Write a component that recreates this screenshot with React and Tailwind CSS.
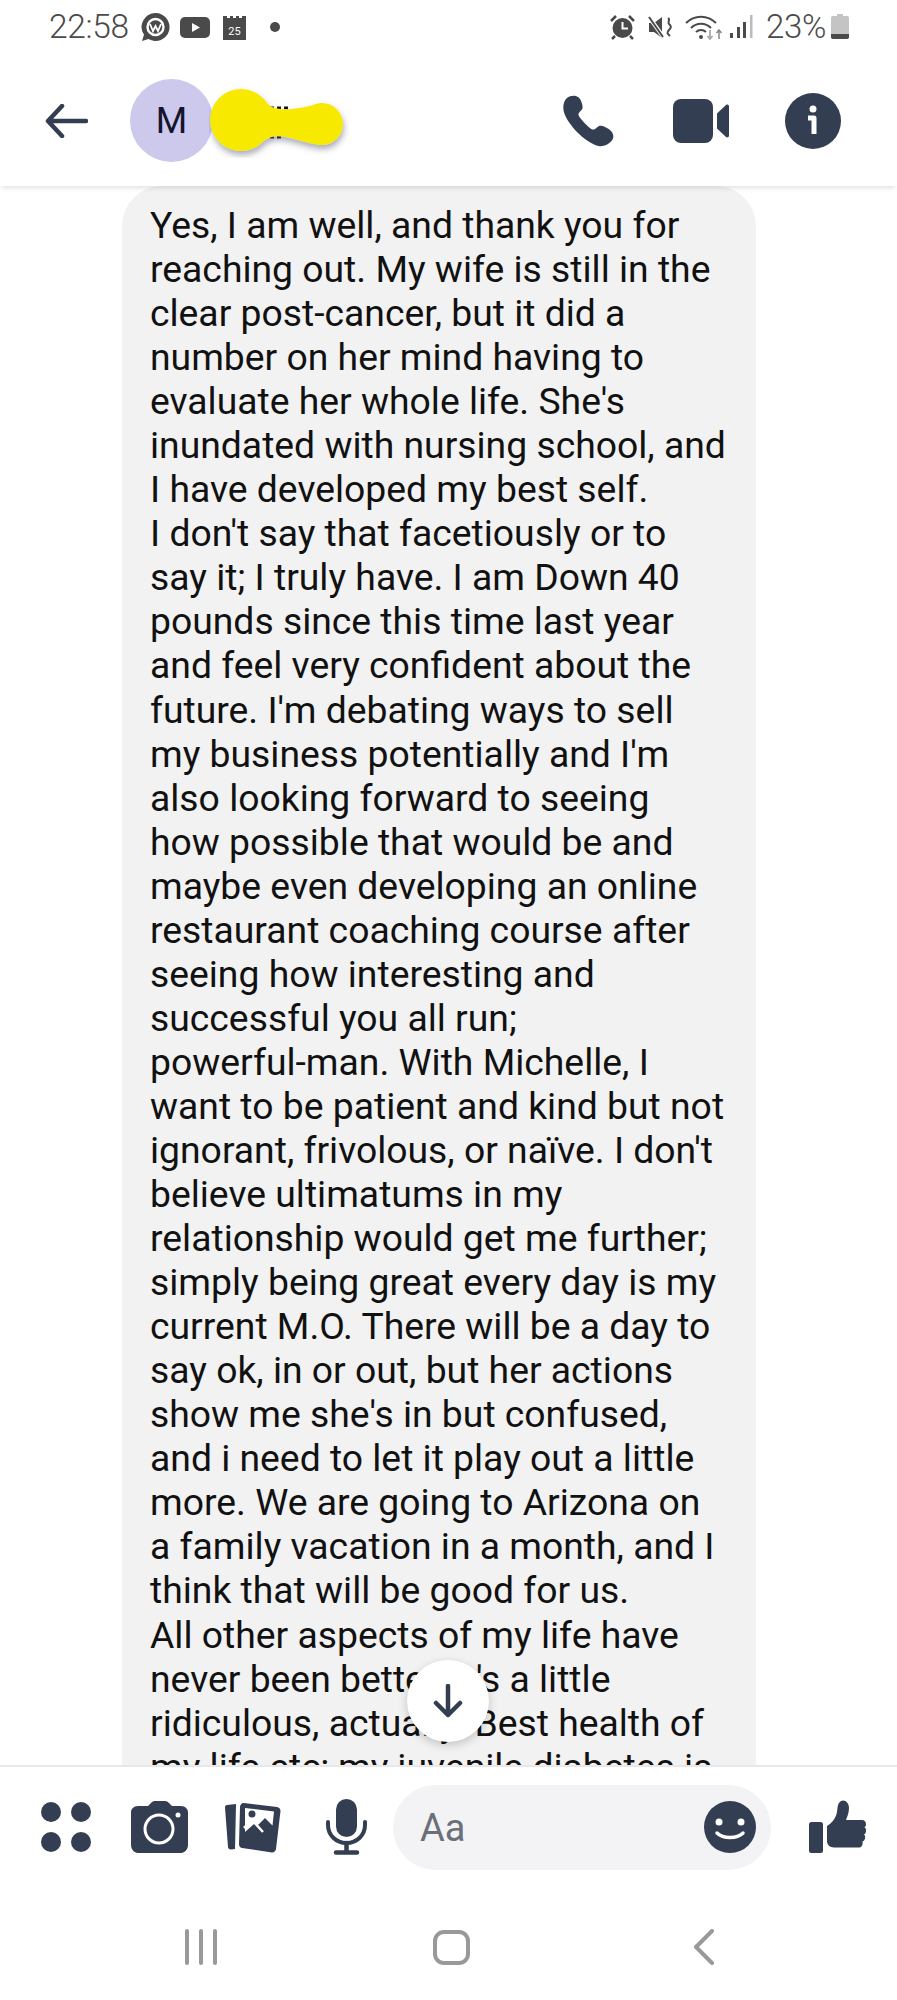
import React from 'react';

const ink = '#333e52';

const messageLines = [
  'Yes, I am well, and thank you for',
  'reaching out. My wife is still in the',
  'clear post-cancer, but it did a',
  'number on her mind having to',
  "evaluate her whole life. She's",
  'inundated with nursing school, and',
  'I have developed my best self.',
  "I don't say that facetiously or to",
  'say it; I truly have. I am Down 40',
  'pounds since this time last year',
  'and feel very confident about the',
  "future. I'm debating ways to sell",
  "my business potentially and I'm",
  'also looking forward to seeing',
  'how possible that would be and',
  'maybe even developing an online',
  'restaurant coaching course after',
  'seeing how interesting and',
  'successful you all run;',
  'powerful-man. With Michelle, I',
  'want to be patient and kind but not',
  "ignorant, frivolous, or naïve. I don't",
  'believe ultimatums in my',
  'relationship would get me further;',
  'simply being great every day is my',
  'current M.O. There will be a day to',
  'say ok, in or out, but her actions',
  "show me she's in but confused,",
  'and i need to let it play out a little',
  'more. We are going to Arizona on',
  'a family vacation in a month, and I',
  'think that will be good for us.',
  'All other aspects of my life have',
  "never been better; it's a little",
  'ridiculous, actually. Best health of',
  'my life etc; my juvenile diabetes is',
];

const StatusBar = () => (
  <div className="h-[55px] flex items-start justify-between pl-[49px] pr-[48px] pt-[12px] text-[#4a4a4a]">
    <div className="flex items-center">
      <span className="text-[33.5px] leading-[30px] font-light tracking-[-0.3px]">22:58</span>
      <svg className="ml-[11px]" width="31" height="30" viewBox="0 0 31 30">
        <path d="M15.5 1a14 14 0 1 1-7 26.1L2 29l2-6.2A14 14 0 0 1 15.5 1z" fill="#4a4a4a" />
        <circle cx="15.5" cy="15" r="8" fill="none" stroke="#fff" strokeWidth="2.4" />
        <path d="M10 12l3 7 2.500-5 2.500 5 3-7" fill="#4a4a4a" stroke="#fff" strokeWidth="1.800" />
      </svg>
      <svg className="ml-[9px]" width="30" height="21" viewBox="0 0 30 21">
        <rect width="30" height="21" rx="5" fill="#4a4a4a" />
        <path d="M12 6l8 4.500-8 4.500z" fill="#fff" />
      </svg>
      <svg className="ml-[12px]" width="25" height="26" viewBox="0 0 25 26">
        <path d="M1 2h4v2h3V2h3v2h3V2h3v2h3V2h4v24H1z" fill="#4a4a4a" />
        <text x="12.500" y="21" fontSize="11" textAnchor="middle" fill="#fff" fontFamily="Roboto, sans-serif">25</text>
      </svg>
      <span className="ml-[23px] w-[10px] h-[10px] rounded-full bg-[#4a4a4a]" />
    </div>
    <div className="flex items-center">
      <svg width="27" height="26" viewBox="0 0 27 26">
        <circle cx="13.500" cy="14" r="10" fill="#4a4a4a" />
        <path d="M13.500 8v6.500H19" fill="none" stroke="#fff" strokeWidth="2" />
        <path d="M2 7l5-5M25 7l-5-5M6 22l-3 3M21 22l3 3" stroke="#4a4a4a" strokeWidth="2.500" />
      </svg>
      <svg className="ml-[12px]" width="26" height="25" viewBox="0 0 26 25">
        <path d="M1 8h5l8-6v21l-8-6H1z" fill="#4a4a4a" />
        <path d="M1 2l15 21" stroke="#fff" strokeWidth="4" />
        <path d="M1 2l14 20" stroke="#4a4a4a" strokeWidth="2" />
        <path d="M20 3c3 2-1 4 1 6s3 3 0 6-1 4 1 6" fill="none" stroke="#4a4a4a" strokeWidth="2" />
      </svg>
      <svg className="ml-[11px]" width="38" height="26" viewBox="0 0 38 26">
        <path d="M1 9a21 21 0 0 1 30 0M6 14a14 14 0 0 1 20 0M11 18a7 7 0 0 1 10 0" fill="none" stroke="#4a4a4a" strokeWidth="2" />
        <circle cx="16" cy="23" r="2" fill="#4a4a4a" />
        <path d="M25 16v9M22.500 22l2.500 3 2.500-3" fill="none" stroke="#aaa" strokeWidth="1.800" />
        <path d="M34 25v-9M31.500 19l2.500-3 2.500 3" fill="none" stroke="#888" strokeWidth="1.500" />
      </svg>
      <svg className="ml-[7px]" width="23" height="26" viewBox="0 0 23 26">
        <rect x="0" y="19" width="3" height="5" fill="#4a4a4a" />
        <rect x="7" y="13" width="3" height="11" fill="#4a4a4a" />
        <rect x="13" y="8" width="3" height="16" fill="#4a4a4a" />
        <rect x="20" y="1" width="2.500" height="23" fill="#bbb" />
      </svg>
      <span className="ml-[13px] text-[33px] leading-[30px] font-light tracking-[-0.3px]">23%</span>
      <svg className="ml-[5px]" width="18" height="26" viewBox="0 0 18 26">
        <path d="M6 0h6v2h4a2 2 0 0 1 2 2v19a2 2 0 0 1-2 2H2a2 2 0 0 1-2-2V4a2 2 0 0 1 2-2h4z" fill="#c4c4c4" />
        <path d="M0 20h18v3a2 2 0 0 1-2 2H2a2 2 0 0 1-2-2z" fill="#4a4a4a" />
      </svg>
    </div>
  </div>
);

const Header = () => (
  <div className="relative z-10 h-[131px] flex items-center pl-[45px] pr-[56px] bg-white shadow-[0_4px_5px_-2px_rgba(0,0,0,0.12)]">
    <svg width="43" height="34" viewBox="0 0 43 34">
      <path d="M41 17H3M17 2L3 17l14 15" fill="none" stroke={ink} strokeWidth="4.500" strokeLinecap="round" strokeLinejoin="round" />
    </svg>
    <div className="ml-[42px] w-[83px] h-[83px] rounded-full bg-[#cdc9ec] flex items-center justify-center text-[36px] font-normal text-[#14142e]">
      M
    </div>
    {/* yellow marker scribbled over the contact name */}
    <svg className="-ml-[4px] -mt-[2px]" width="140" height="76" viewBox="0 0 140 76">
      <defs>
        <filter id="marker" x="-10%" y="-10%" width="120%" height="130%">
          <feDropShadow dx="1" dy="4" stdDeviation="3" floodColor="#555a70" floodOpacity="0.5" />
        </filter>
      </defs>
      <path d="M61 26h20M61 55h14" stroke="#111" strokeWidth="3" strokeDasharray="4 3" />
      <g filter="url(#marker)" fill="#f7ea06">
        <circle cx="32" cy="38" r="31" />
        <circle cx="113" cy="42" r="21" />
        <path d="M55 17C62 32 85 28 113 21V63C90 62 70 47 55 59z" />
      </g>
    </svg>
    <div className="ml-auto flex items-center">
      <svg width="52" height="52" viewBox="0 0 52 52">
        <path d="M4 3c3-2.500 8-3 11-1 3 2 5 8 4.500 11-.4 2.500-4 4-4 6.500 0 3 11 14 14 15 2.500.8 4-2.500 6.500-3.500 3-1.200 9 2 12 5 3 3.500 3 7 .500 10-3 3.500-8 6-13 5C22 48 2 27 .500 15-.2 10 1 5.500 4 3z" fill={ink} />
      </svg>
      <svg className="ml-[58px]" width="56" height="44" viewBox="0 0 56 44">
        <rect width="40" height="44" rx="8" fill={ink} />
        <path d="M44 14.500L53 6c1.500-1 3-.3 3 1.500v29c0 1.800-1.500 2.500-3 1.500l-9-8.500z" fill={ink} />
      </svg>
      <svg className="ml-[56px]" width="56" height="56" viewBox="0 0 56 56">
        <circle cx="28" cy="28" r="28" fill={ink} />
        <circle cx="28" cy="16" r="3.500" fill="#fff" />
        <path d="M23 25h6v16" fill="none" stroke="#fff" strokeWidth="5" strokeLinejoin="round" />
      </svg>
    </div>
  </div>
);

const Composer = () => (
  <div className="relative z-10 h-[235px] bg-white border-t-2 border-[#e8e8e8]">
    <div className="h-[103px] pt-[17px] pl-[41px] flex items-center">
      <svg width="50" height="50" viewBox="0 0 50 50">
        <circle cx="10" cy="10" r="10" fill={ink} />
        <circle cx="40" cy="10" r="10" fill={ink} />
        <circle cx="10" cy="40" r="10" fill={ink} />
        <circle cx="40" cy="40" r="10" fill={ink} />
      </svg>
      <svg className="ml-[40px]" width="57" height="52" viewBox="0 0 57 52">
        <path d="M7 5h10l3-3c1-1.500 3-2 4-2h10c1.500 0 3 .7 4 2l3 3h9c4 0 7 3 7 6v33c0 4-3 8-7 8H7c-4 0-7-4-7-8V11c0-3 3-6 7-6z" fill={ink} />
        <circle cx="28" cy="28" r="14" fill="none" stroke="#fff" strokeWidth="3" />
        <circle cx="47" cy="14" r="2.500" fill="#fff" />
      </svg>
      <svg className="ml-[37px]" width="56" height="54" viewBox="0 0 56 54">
        <path d="M11 4L2 5c-1.500.2-2 1-2 2.500L3 47c.2 1.500 1 2.500 3 2.500l4-.5z" fill={ink} />
        <path d="M19 3l33 4c2 .3 3.500 2 3.500 4L51 49c-.3 2-2 3.500-4 3.500L17 48c-2-.3-3-2-3-4l1-37c0-2.500 2-4.300 4-4z" fill={ink} />
        <path d="M20 8l29 3.500-1.500 14-7.500-7.500-7 7-4-1-9 8z" fill="#fff" />
        <circle cx="27" cy="14" r="3.500" fill={ink} />
        <path d="M19 28l8-8 11 12" fill="none" stroke="#fff" strokeWidth="2.500" />
      </svg>
      <svg className="ml-[45px]" width="41" height="56" viewBox="0 0 41 56">
        <rect x="10" y="0" width="21" height="38" rx="10.500" fill={ink} />
        <path d="M2 23v3c0 10 8 18 18.500 18S39 36 39 26v-3" fill="none" stroke={ink} strokeWidth="4" strokeLinecap="round" />
        <path d="M20.500 44v8M10 53.500h21" stroke={ink} strokeWidth="4.500" strokeLinecap="round" />
      </svg>
      <div className="ml-[26px] w-[378px] h-[85px] rounded-full bg-[#f3f3f5] flex items-center pl-[27px] pr-[15px]">
        <span className="mt-[2px] text-[38px] text-[#6b6f78]">Aa</span>
        <svg className="ml-auto" width="52" height="52" viewBox="0 0 52 52">
          <circle cx="26" cy="26" r="26" fill={ink} />
          <circle cx="15" cy="21" r="3.500" fill="#fff" />
          <circle cx="37" cy="21" r="3.500" fill="#fff" />
          <path d="M13 32c6 6 20 6 26 0" fill="none" stroke="#fff" strokeWidth="3.500" strokeLinecap="round" />
        </svg>
      </div>
      <svg className="ml-[38px]" width="57" height="54" viewBox="0 0 57 54">
        <rect x="0" y="22" width="14" height="31" rx="2.500" fill={ink} />
        <path d="M18 26c5-3 9-8 10-14 .5-4 .5-9 4-11 4-2 8 2 8 7 0 5-2 9-3 12h16c2.500 0 4 2 4 4 0 1.500-.5 2.500-1.500 3.500 1.500 1 2 2.500 1.500 4-.3 1.500-1 2.500-2 3 1 1 1.500 2.500 1 4-.5 1.500-1 2.500-2.500 3 .5 2 0 6-4 6H25c-4 0-7-3-7-6z" fill={ink} />
      </svg>
    </div>
    <div className="mt-[59px] h-[36px] flex items-center">
      <div className="ml-[185px] flex gap-[10px]">
        <span className="w-[4px] h-[36px] rounded-full bg-[#999]" />
        <span className="w-[4px] h-[36px] rounded-full bg-[#999]" />
        <span className="w-[4px] h-[36px] rounded-full bg-[#999]" />
      </div>
      <span className="ml-[216px] w-[37px] h-[35px] rounded-[11px] border-[4px] border-[#999]" />
      <svg className="ml-[223px]" width="22" height="36" viewBox="0 0 22 36">
        <path d="M19 2L3 18l16 16" fill="none" stroke="#999" strokeWidth="4" strokeLinecap="round" strokeLinejoin="round" />
      </svg>
    </div>
  </div>
);

export default function App() {
  return (
    <div className="w-[897px] h-[2000px] flex flex-col overflow-hidden bg-white font-['Roboto',sans-serif]">
      <StatusBar />
      <Header />
      <div className="relative flex-1 min-h-0 overflow-hidden">
        <div className="ml-[122px] w-[634px] h-full rounded-t-[40px] bg-[#f2f2f3] pl-[28px] pt-[17px] text-[37.3px] leading-[44.05px] text-[#111]">
          {messageLines.map((line) => (
            <div key={line} className="whitespace-nowrap">{line}</div>
          ))}
        </div>
        {/* jump to latest */}
        <div className="absolute left-[407px] bottom-[23px] w-[82px] h-[82px] rounded-full bg-white shadow-[0_3px_10px_rgba(0,0,0,0.2)] flex items-center justify-center">
          <svg width="30" height="34" viewBox="0 0 30 34">
            <path d="M15 2v29M3 19l12 12 12-12" fill="none" stroke={ink} strokeWidth="4.500" strokeLinecap="round" strokeLinejoin="round" />
          </svg>
        </div>
      </div>
      <Composer />
    </div>
  );
}
